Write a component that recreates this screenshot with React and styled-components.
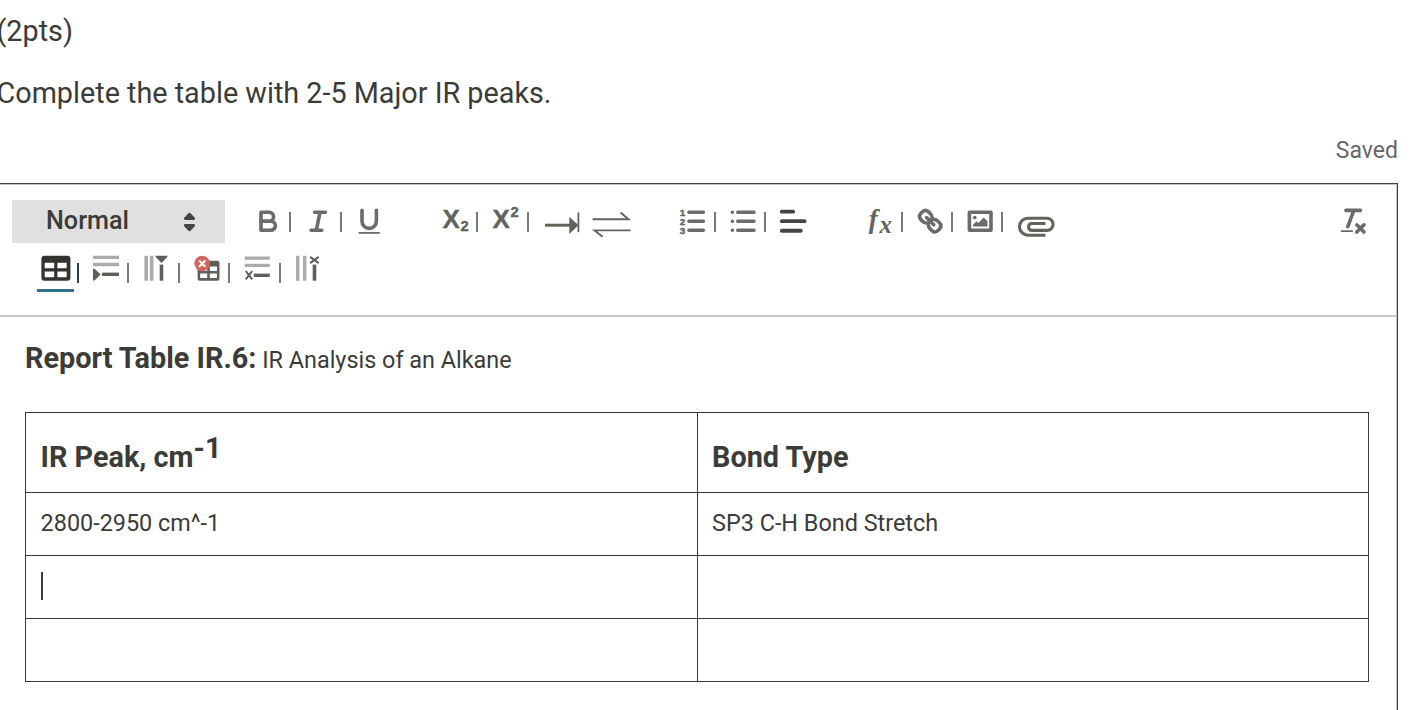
import React from 'react';
import styled, { createGlobalStyle } from 'styled-components';

const GlobalStyle = createGlobalStyle`
  html, body {
    margin: 0;
    background: #fff;
    overflow: hidden;
  }
  body {
    font-family: Roboto, "Liberation Sans", sans-serif;
    color: #3b3b37;
  }
`;

const Page = styled.main`
  box-sizing: border-box;
  width: 1418px;
  height: 710px;
  overflow: hidden;
`;

const Question = styled.div`
  height: 183px;
  display: flex;
  flex-direction: column;
`;

const Prompt = styled.p`
  margin: 0 0 0 -3.5px;
  padding-top: ${props => props.top}px;
  font-size: 28.77px;
  line-height: 36px;
`;

const Status = styled.span`
  align-self: flex-end;
  margin: 25px 20px 0 0;
  font-size: 23px;
  line-height: 30px;
  color: #666;
`;

const Editor = styled.section`
  box-sizing: border-box;
  width: 1398px;
  height: 540px;
  border: solid #41413e;
  border-width: 1px 1px 0 0;
  box-shadow: inset -1px 1px 0 #c4c4c4;
`;

const Toolbar = styled.div`
  box-sizing: border-box;
  height: 133px;
  padding: 16px 27px 0 12px;
  border-bottom: 2px solid #c8c8c8;
  margin-right: 1px;
`;

const ToolRow = styled.div`
  display: flex;
  align-items: center;
  height: 43px;
`;

const TableRow = styled(ToolRow)`
  height: 51px;
  padding: 0 0 0 27.6px;
`;

const Picker = styled.div`
  box-sizing: border-box;
  display: flex;
  align-items: center;
  justify-content: space-between;
  width: 213px;
  height: 43px;
  padding: 0 29px 3px 34px;
  background: #e0e0e0;
  font-size: 25.2px;
  font-weight: 500;
  svg {
    margin-top: 3px;
  }
`;

const Group = styled.div`
  display: flex;
  margin-left: ${props => props.gap}px;
`;

const Clear = styled(Group)`
  margin-left: auto;
`;

const Slot = styled.div`
  position: relative;
  display: flex;
  align-items: center;
  flex: none;
  width: ${props => (props.last ? 32.4 : 50.4)}px;
  height: 32.4px;
  &:after {
    content: '';
    display: ${props => (props.divided ? 'block' : 'none')};
    width: 2px;
    height: 20px;
    margin: ${props => (props.low ? 9 : 2)}px 0 0 5px;
    background: ${props => (props.active ? '#24424b' : '#7a7a75')};
  }
  &:before {
    content: '';
    display: ${props => (props.active ? 'block' : 'none')};
    position: absolute;
    left: -2.6px;
    top: 37px;
    width: 37px;
    height: 3px;
    background: #2f708f;
  }
`;

const Icon = styled.svg`
  flex: none;
  width: 32.4px;
  height: 32.4px;
  overflow: visible;
  fill: none;
  stroke: ${props => props.$ink || '#6b6b6b'};
  stroke-width: 2;
  stroke-linecap: round;
  stroke-linejoin: round;
  .fill {
    fill: #6b6b6b;
    stroke: none;
  }
  text {
    fill: #63635e;
    stroke: none;
    font-family: "Liberation Sans", Arial, sans-serif;
    font-weight: bold;
  }
  .serif {
    font-family: "Liberation Serif", serif;
    font-style: italic;
  }
  .digit {
    stroke: #6b6b6b;
    stroke-width: 0.25;
  }
  .script {
    stroke: #63635e;
    stroke-width: 0.4;
  }
`;

const Flat = styled(Icon)`
  stroke-linecap: butt;
  stroke-linejoin: miter;
`;

const Content = styled.div`
  padding: 20px 28px 0 25px;
`;

const Title = styled.p`
  margin: 0;
  height: 75px;
  font-size: 23.4px;
  line-height: 42px;
  strong {
    font-size: 28.8px;
    font-weight: 700;
  }
`;

const Table = styled.table`
  width: 1344px;
  border-collapse: collapse;
  table-layout: fixed;
  border: 1px solid #1c2b2f;
`;

const Cell = styled.td`
  box-sizing: border-box;
  height: 63px;
  padding: 0 14px 2px 14.6px;
  border: 1px solid #343a3b;
  font-size: 23.4px;
  line-height: 30px;
`;

const HeadCell = styled(Cell)`
  height: 80px;
  padding: 9px 14px 0 14.6px;
  font-size: 28.8px;
  font-weight: 700;
  text-align: left;
  sup {
    font-size: 28.8px;
    line-height: 0;
    vertical-align: 9px;
  }
`;

const Caret = styled.span`
  display: block;
  width: 2px;
  height: 28px;
  margin-left: 0.4px;
  background: #3b3b37;
`;

const BoldIcon = () => (
  <Icon viewBox="0 0 18 18">
    <path d="M5,4H9.5A2.5,2.5,0,0,1,12,6.5A2.5,2.5,0,0,1,9.5,9H5Z" />
    <path d="M5,9H10.5A2.5,2.5,0,0,1,13,11.5A2.5,2.5,0,0,1,10.5,14H5Z" />
  </Icon>
);

const ItalicIcon = () => (
  <Icon viewBox="0 0 18 18">
    <path d="M7,4H13M5,14H11M8,14L10,4" />
  </Icon>
);

const UnderlineIcon = () => (
  <Icon viewBox="0 0 18 18">
    <path d="M5,3V9a4,4,0,0,0,8,0V3" />
    <rect className="fill" x="3" y="15" width="12" height="1" rx="0.5" />
  </Icon>
);

const ScriptIcon = ({ raised }) => (
  <Icon viewBox="0 0 32.4 32.4">
    <text className="script" x="3.6" y="22.7" fontSize="26">X</text>
    <text className="script" x="21.4" y={raised ? 11.9 : 26.2} fontSize="14.8">2</text>
  </Icon>
);

const TabIcon = () => (
  <Flat viewBox="0 0 32.4 32.4" $ink="#63635c">
    <path d="M5,20.2H31" strokeWidth="3" />
    <path d="M29.3,11.7L38.5,20.3L29.3,29Z" fill="#63635c" stroke="none" />
    <path d="M38.4,7.4V27.2" strokeWidth="1.8" />
  </Flat>
);

const EquilibriumIcon = () => (
  <Flat viewBox="0 0 32.4 32.4" $ink="#63635c">
    <path d="M2.6,14.2H38.6L30.5,7.5M40.6,25.4H4.6L12.6,31.8" strokeWidth="1.9" />
  </Flat>
);

const OrderedIcon = () => (
  <Icon viewBox="0 0 18 18">
    <path d="M7.2,4H15.2M7.2,9H15.2M7.2,14H15.2" />
    <text className="digit" x="2.1" y="6" fontSize="5.5">1</text>
    <text className="digit" x="2.1" y="11" fontSize="5.5">2</text>
    <text className="digit" x="2.1" y="16" fontSize="5.5">3</text>
  </Icon>
);

const BulletIcon = () => (
  <Icon viewBox="0 0 18 18">
    <path d="M6,4H15M6,9H15M6,14H15M3,4H3M3,9H3M3,14H3" />
  </Icon>
);

const AlignIcon = () => (
  <Icon viewBox="0.5 0.5 17 17" $ink="#444">
    <path d="M3,4H9M3,9H15M3,14H13" />
  </Icon>
);

const FormulaIcon = () => (
  <Icon viewBox="0 0 32.4 32.4">
    <text className="serif" x="5.8" y="22.8" fontSize="27">f</text>
    <text className="serif" x="16.6" y="28" fontSize="25">x</text>
  </Icon>
);

const LinkIcon = () => (
  <Icon viewBox="0 0 18 18">
    <path d="M7,7L11,11" />
    <path d="M8.9,4.577a3.476,3.476,0,0,1,.36,4.679A3.476,3.476,0,0,1,4.577,8.9C3.185,7.5,2.035,6.4,4.217,4.217S7.5,3.185,8.9,4.577Z" />
    <path d="M13.423,9.1a3.476,3.476,0,0,0-4.679-.36,3.476,3.476,0,0,0,.36,4.679c1.392,1.392,2.5,2.542,4.679.36S14.815,10.5,13.423,9.1Z" />
  </Icon>
);

const ImageIcon = () => (
  <Flat viewBox="0 0 18 18">
    <rect x="3" y="4" width="12" height="10" strokeLinejoin="round" />
    <circle className="fill" cx="6" cy="7" r="1" />
    <path className="fill" d="M5,12V11L7,9L8,10L11,7L13,9V12Z" />
  </Flat>
);

const ClipIcon = () => (
  <Flat viewBox="0 0 32.4 32.4" $ink="#63635c">
    <path
      d="M31.5,30.2H14A8.4,8.4,0,0,1,14,13.2H33A6.1,6.1,0,0,1,33,25.4H17.5A3.5,3.5,0,0,1,17.5,18.5H31.5"
      strokeWidth="3.1"
    />
  </Flat>
);

const ClearIcon = () => (
  <Icon viewBox="0 0 18 18">
    <path d="M5,3H13M6,12L9.35,3M11,11L15,15M15,11L11,15" />
    <rect className="fill" x="2" y="14" width="7" height="1" rx="0.5" />
  </Icon>
);

const TableIcon = () => (
  <Icon viewBox="0 0 32.4 32.4">
    <path
      fill="#33332f"
      fillRule="evenodd"
      stroke="none"
      d="M4.4,3.7H27.4A3,3,0,0,1,30.4,6.7V25.7A3,3,0,0,1,27.4,28.7H4.4A3,3,0,0,1,1.4,25.7V6.7A3,3,0,0,1,4.4,3.7ZM4.7,10.8V16.2H14.2V10.8ZM17.4,10.8V16.2H26.7V10.8ZM4.7,19.6V25.2H14.2V19.6ZM17.4,19.6V25.2H26.7V19.6Z"
    />
  </Icon>
);

const AddRowIcon = () => (
  <Flat viewBox="0 0 32.4 32.4" $ink="#ababab">
    <path d="M3,5.3H29M3,12.5H29" strokeWidth="3.3" />
    <path d="M12,22.3H29" stroke="#5f5f59" strokeWidth="3.4" />
    <path d="M3,16.7H4.5L10.8,22.5L4.5,28.4H3Z" fill="#5f5f59" stroke="none" />
  </Flat>
);

const AddColumnIcon = () => (
  <Flat viewBox="0 0 32.4 32.4" $ink="#ababab">
    <path d="M6.2,3.7V28.7M11.7,3.7V28.7" strokeWidth="3.6" />
    <path d="M21.5,12.6V28.7" stroke="#5f5f59" strokeWidth="3.6" />
    <path d="M15.7,3.7H27.3V5L21.5,11L15.7,5Z" fill="#5f5f59" stroke="none" />
  </Flat>
);

const DeleteTableIcon = () => (
  <Icon viewBox="0 0 32.4 32.4">
    <path
      fill="#5f5f59"
      fillRule="evenodd"
      stroke="none"
      d="M8.4,8.7H26.2A2.3,2.3,0,0,1,28.5,11V26.4A2.3,2.3,0,0,1,26.2,28.7H8.9A2.3,2.3,0,0,1,6.6,26.4V8.7ZM9.2,14.5V18.9H16.2V14.5ZM18.8,14.5V18.9H26V14.5ZM9.2,21.6V26H16.2V21.6ZM18.8,21.6V26H26V21.6Z"
    />
    <circle cx="11.2" cy="11.6" r="7.8" fill="#d4655c" stroke="none" />
    <path d="M8.6,9L13.8,14.2M13.8,9L8.6,14.2" stroke="#fff" strokeWidth="2" />
  </Icon>
);

const DeleteRowIcon = () => (
  <Flat viewBox="0 0 32.4 32.4" $ink="#ababab">
    <path d="M3.8,6.1H28.8M3.8,13.3H28.8" strokeWidth="3.2" />
    <path d="M12.8,23.3H28.8" stroke="#5f5f59" strokeWidth="3.4" />
    <path d="M4.8,19L11.2,27.4M11.2,19L4.8,27.4" stroke="#5f5f59" />
  </Flat>
);

const DeleteColumnIcon = () => (
  <Flat viewBox="0 0 32.4 32.4" $ink="#ababab">
    <path d="M5.7,3.7V28.7M12.7,3.7V28.7" strokeWidth="3.4" />
    <path d="M22.5,12.6V28.7" stroke="#5f5f59" strokeWidth="3.6" />
    <path d="M18.1,4.9L26.7,11.1M26.7,4.9L18.1,11.1" stroke="#5f5f59" />
  </Flat>
);

const App = () => {
  return (
    <Page>
      <GlobalStyle />
      <Question>
        <Prompt top={12.5}>(2pts)</Prompt>
        <Prompt top={26.5}>Complete the table with 2-5 Major IR peaks.</Prompt>
        <Status>Saved</Status>
      </Question>
      <Editor>
        <Toolbar>
          <ToolRow>
            <Picker>
              Normal
              <svg width="13" height="20" viewBox="0 0 13 20" fill="#444">
                <path d="M6.5,0.8Q7.2,0.8 7.8,1.5L11.8,5.8Q12.6,8 10.5,8H2.5Q0.4,8 1.2,5.8L5.2,1.5Q5.8,0.8 6.5,0.8Z" />
                <path d="M6.5,19.2Q7.2,19.2 7.8,18.5L11.8,14.2Q12.6,12 10.5,12H2.5Q0.4,12 1.2,14.2L5.2,18.5Q5.8,19.2 6.5,19.2Z" />
              </svg>
            </Picker>
            <Group gap={27}>
              <Slot divided><BoldIcon /></Slot>
              <Slot divided><ItalicIcon /></Slot>
              <Slot last><UnderlineIcon /></Slot>
            </Group>
            <Group gap={53.8}>
              <Slot divided><ScriptIcon /></Slot>
              <Slot divided><ScriptIcon raised /></Slot>
              <Slot><TabIcon /></Slot>
              <Slot last><EquilibriumIcon /></Slot>
            </Group>
            <Group gap={53.8}>
              <Slot divided><OrderedIcon /></Slot>
              <Slot divided><BulletIcon /></Slot>
              <Slot last><AlignIcon /></Slot>
            </Group>
            <Group gap={53.8}>
              <Slot divided><FormulaIcon /></Slot>
              <Slot divided><LinkIcon /></Slot>
              <Slot divided><ImageIcon /></Slot>
              <Slot last><ClipIcon /></Slot>
            </Group>
            <Clear>
              <Slot last><ClearIcon /></Slot>
            </Clear>
          </ToolRow>
          <TableRow>
            <Slot divided low active><TableIcon /></Slot>
            <Slot divided low><AddRowIcon /></Slot>
            <Slot divided low><AddColumnIcon /></Slot>
            <Slot divided low><DeleteTableIcon /></Slot>
            <Slot divided low><DeleteRowIcon /></Slot>
            <Slot last><DeleteColumnIcon /></Slot>
          </TableRow>
        </Toolbar>
        <Content>
          <Title>
            <strong>Report Table IR.6:</strong> IR Analysis of an Alkane
          </Title>
          <Table>
            <tbody>
              <tr>
                <HeadCell as="th">IR Peak, cm<sup>-1</sup></HeadCell>
                <HeadCell as="th">Bond Type</HeadCell>
              </tr>
              <tr>
                <Cell>2800-2950 cm^-1</Cell>
                <Cell>SP3 C-H Bond Stretch</Cell>
              </tr>
              <tr>
                <Cell><Caret /></Cell>
                <Cell />
              </tr>
              <tr>
                <Cell />
                <Cell />
              </tr>
            </tbody>
          </Table>
        </Content>
      </Editor>
    </Page>
  );
};

export default App;
